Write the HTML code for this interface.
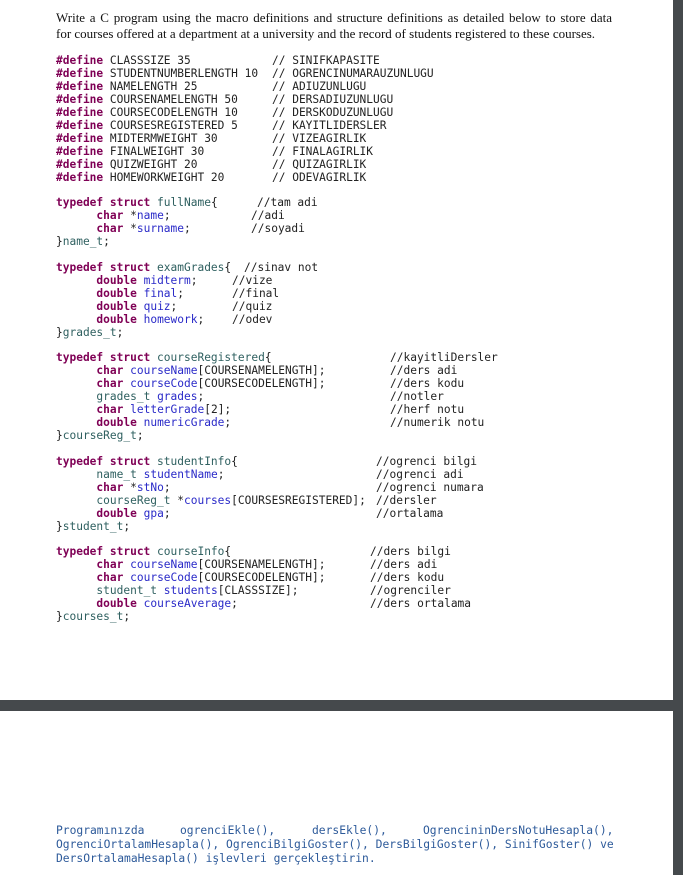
<!DOCTYPE html>
<html><head><meta charset="utf-8"><style>
body{margin:0;width:683px;height:875px;background:#fff;position:relative;overflow:hidden}
.side{position:absolute;left:673px;top:0;width:10px;height:875px;background:#45494c}
.band{position:absolute;left:0;top:700px;width:683px;height:11px;background:#45494c}
.h{position:absolute;left:56px;width:556px;font:13px/16px "Liberation Serif",serif;color:#111;text-align:justify;text-align-last:justify}
.l{position:absolute;font:11.2px "DejaVu Sans Mono",monospace;color:#222;white-space:pre;line-height:13px}
.k{color:#7f0055;font-weight:bold}
.v{color:#2a2ac8}
.t{color:#2f6060}
.b{position:absolute;font:11.3px "DejaVu Sans Mono",monospace;color:#2d5a9a;white-space:pre;line-height:14px}
</style></head><body>
<div class="side"></div><div class="band"></div>
<div class="h" style="top:10px">Write a C program using the macro definitions and structure definitions as detailed below to store data</div>
<div class="h" style="top:26px;text-align-last:left">for courses offered at a department at a university and the record of students registered to these courses.</div>

<div class="l" style="left:56px;top:54px"><span class="k">#define</span> CLASSSIZE 35
<span class="k">#define</span> STUDENTNUMBERLENGTH 10
<span class="k">#define</span> NAMELENGTH 25
<span class="k">#define</span> COURSENAMELENGTH 50
<span class="k">#define</span> COURSECODELENGTH 10
<span class="k">#define</span> COURSESREGISTERED 5
<span class="k">#define</span> MIDTERMWEIGHT 30
<span class="k">#define</span> FINALWEIGHT 30
<span class="k">#define</span> QUIZWEIGHT 20
<span class="k">#define</span> HOMEWORKWEIGHT 20</div>
<div class="l" style="left:272px;top:54px">// SINIFKAPASITE
// OGRENCINUMARAUZUNLUGU
// ADIUZUNLUGU
// DERSADIUZUNLUGU
// DERSKODUZUNLUGU
// KAYITLIDERSLER
// VIZEAGIRLIK
// FINALAGIRLIK
// QUIZAGIRLIK
// ODEVAGIRLIK</div>

<div class="l" style="left:56px;top:196px"><span class="k">typedef struct</span> <span class="t">fullName</span>{
      <span class="k">char</span> *<span class="v">name</span>;
      <span class="k">char</span> *<span class="v">surname</span>;
}<span class="t">name_t</span>;</div>
<div class="l" style="left:257px;top:196px">//tam adi</div>
<div class="l" style="left:251px;top:209px">//adi
//soyadi</div>

<div class="l" style="left:56px;top:261px"><span class="k">typedef struct</span> <span class="t">examGrades</span>{
      <span class="k">double</span> <span class="v">midterm</span>;
      <span class="k">double</span> <span class="v">final</span>;
      <span class="k">double</span> <span class="v">quiz</span>;
      <span class="k">double</span> <span class="v">homework</span>;
}<span class="t">grades_t</span>;</div>
<div class="l" style="left:244px;top:261px">//sinav not</div>
<div class="l" style="left:232px;top:274px">//vize
//final
//quiz
//odev</div>

<div class="l" style="left:56px;top:351px"><span class="k">typedef struct</span> <span class="t">courseRegistered</span>{
      <span class="k">char</span> <span class="v">courseName</span>[COURSENAMELENGTH];
      <span class="k">char</span> <span class="v">courseCode</span>[COURSECODELENGTH];
      <span class="t">grades_t</span> <span class="v">grades</span>;
      <span class="k">char</span> <span class="v">letterGrade</span>[2];
      <span class="k">double</span> <span class="v">numericGrade</span>;
}<span class="t">courseReg_t</span>;</div>
<div class="l" style="left:390px;top:351px">//kayitliDersler
//ders adi
//ders kodu
//notler
//herf notu
//numerik notu</div>

<div class="l" style="left:56px;top:455px"><span class="k">typedef struct</span> <span class="t">studentInfo</span>{
      <span class="t">name_t</span> <span class="v">studentName</span>;
      <span class="k">char</span> *<span class="v">stNo</span>;
      <span class="t">courseReg_t</span> *<span class="v">courses</span>[COURSESREGISTERED];
      <span class="k">double</span> <span class="v">gpa</span>;
}<span class="t">student_t</span>;</div>
<div class="l" style="left:376px;top:455px">//ogrenci bilgi
//ogrenci adi
//ogrenci numara
//dersler
//ortalama</div>

<div class="l" style="left:56px;top:545px"><span class="k">typedef struct</span> <span class="t">courseInfo</span>{
      <span class="k">char</span> <span class="v">courseName</span>[COURSENAMELENGTH];
      <span class="k">char</span> <span class="v">courseCode</span>[COURSECODELENGTH];
      <span class="t">student_t</span> <span class="v">students</span>[CLASSSIZE];
      <span class="k">double</span> <span class="v">courseAverage</span>;
}<span class="t">courses_t</span>;</div>
<div class="l" style="left:370px;top:545px">//ders bilgi
//ders adi
//ders kodu
//ogrenciler
//ders ortalama</div>

<div class="b" style="left:56px;top:824px">Programınızda</div>
<div class="b" style="left:180px;top:824px">ogrenciEkle(),</div>
<div class="b" style="left:312px;top:824px">dersEkle(),</div>
<div class="b" style="left:423px;top:824px">OgrencininDersNotuHesapla(),</div>
<div class="b" style="left:56px;top:838px">OgrenciOrtalamHesapla(), OgrenciBilgiGoster(), DersBilgiGoster(), SinifGoster() ve</div>
<div class="b" style="left:56px;top:852px">DersOrtalamaHesapla() işlevleri gerçekleştirin.</div>
</body></html>
